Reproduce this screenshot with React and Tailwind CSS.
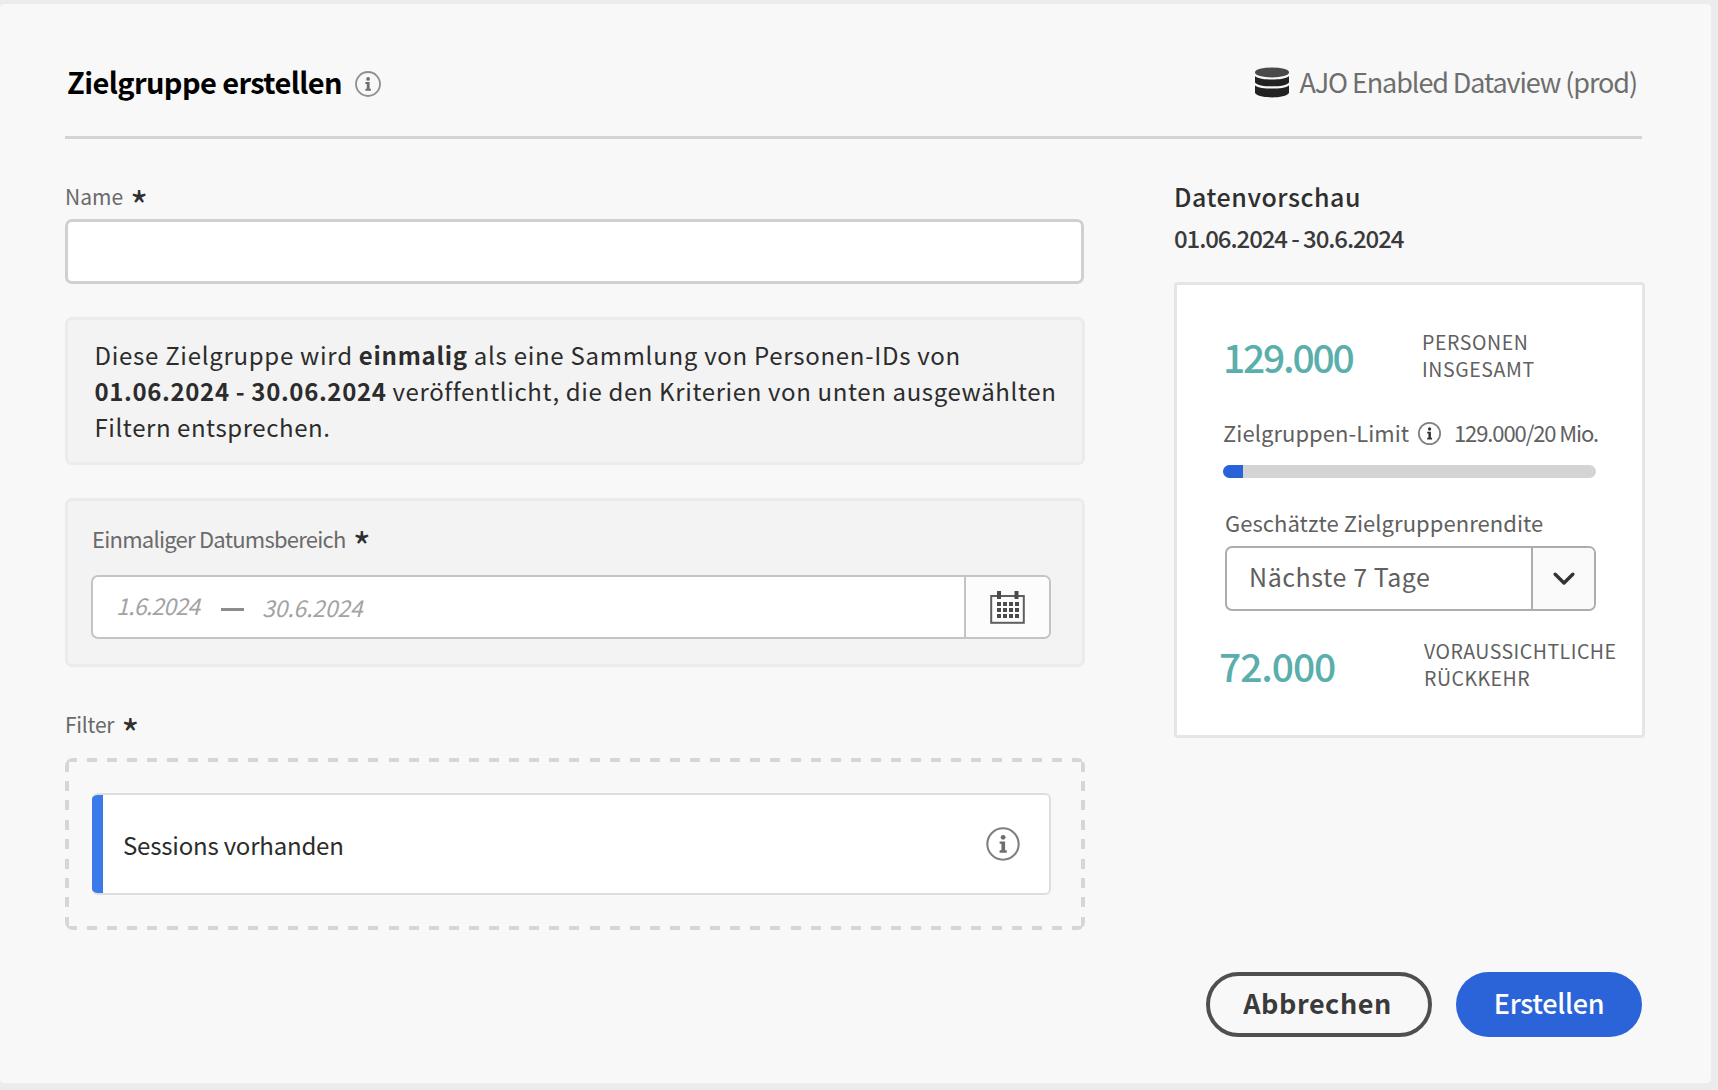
import React from "react";

function InfoIcon({ className, ring = 1.8, fill = "#6e6e6e" }) {
  return (
    <svg viewBox="0 0 26 26" className={className} fill="none">
      <circle cx="13" cy="13" r="12" stroke="currentColor" strokeWidth={ring} />
      <circle cx="13.1" cy="7.9" r="1.85" fill={fill} />
      <path d="M10.4 11.100h4.200v6.700h1.300v1.900h-5.500v-1.900h1.400v-4.900h-1.400z" fill={fill} />
    </svg>
  );
}

function DatabaseIcon({ className }) {
  return (
    <svg viewBox="0 0 34 31" className={className}>
      <ellipse cx="17" cy="5.4" rx="17" ry="5" fill="#4a4a4a" />
      <path d="M0 9.2c3 2.4 9.500 3.300 17 3.300s14-.9 17-3.300v6.200c-2 2.700-9 3.900-17 3.900S2 18.100 0 15.400z" fill="#222" />
      <path d="M0 18.400c3 2.300 9.500 3.200 17 3.200s14-.9 17-3.200v7.600c-2 3-9 4.400-17 4.400S2 29 0 26z" fill="#222" />
    </svg>
  );
}

function CalendarIcon({ className }) {
  const cols = [7, 13, 19, 25];
  const rows = [11, 17, 23];
  return (
    <svg viewBox="0 0 35 33" className={className} fill="none">
      <rect x="1.200" y="5" width="32.600" height="26.800" stroke="#5e5e5e" strokeWidth="2" />
      <rect x="7" y="0" width="4" height="8" fill="#4b4b4b" />
      <rect x="24.500" y="0" width="4" height="8" fill="#4b4b4b" />
      {rows.map((y) => cols.map((x) => <rect key={x + "-" + y} x={x} y={y} width="4" height="4" fill="#4b4b4b" />))}
    </svg>
  );
}

function FieldLabel({ children, className }) {
  return (
    <div className={"flex h-[30px] items-center whitespace-nowrap text-[#6a6a6a] " + className}>
      <span>{children}</span>
      <span className="mt-[13px] ml-[7px] text-[39px] leading-[30px] font-normal text-[#2f2f2f]">*</span>
    </div>
  );
}

export default function App() {
  return (
    <div className="h-[1090px] w-full overflow-hidden bg-[#ececec] pt-[4px] pr-[7px] font-['Noto_Sans_CJK_SC','Noto_Sans',sans-serif]">
      <div className="h-[1079px] rounded-[4px] bg-[#f8f8f8] pl-[65px]">
        <header className="flex h-[135px] w-[1577px] items-center border-b-[3px] border-[#d4d4d4] pt-[21px]">
          <h1 className="ml-[2px] text-[29px] leading-[44px] font-bold tracking-[-0.6px] whitespace-nowrap text-black">
            Zielgruppe erstellen
          </h1>
          <InfoIcon className="mt-[7px] ml-[13px] size-[26px] text-[#8e8e8e]" />
          <div className="mt-[2px] mr-[5px] ml-auto flex items-center">
            <DatabaseIcon className="mt-[1px] mr-[10px] h-[31px] w-[34px]" />
            <span className="text-[27px] leading-[40px] tracking-[-1.1px] whitespace-nowrap text-[#6e6e6e]">
              AJO Enabled Dataview (prod)
            </span>
          </div>
        </header>

        <div className="flex">
          <main className="w-[1020px]">
            <FieldLabel className="mt-[43px] text-[21px]">Name</FieldLabel>
            <div className="mt-[7px] h-[65px] w-[1019px] rounded-[7px] border-[3px] border-[#d0d0d0] bg-white" />

            <p className="mt-[33px] h-[148px] rounded-[7px] border-[3px] border-[#ebebeb] bg-[#f3f3f3] pt-[17px] pl-[26.500px] text-[24px] leading-[36px] whitespace-nowrap text-[#2c2c2c]">
              <span className="tracking-[0.72px]">
                Diese Zielgruppe wird <b>einmalig</b> als eine Sammlung von Personen-IDs von
              </span>
              <br />
              <span className="tracking-[0.63px]">
                <b>01.06.2024 - 30.06.2024</b> veröffentlicht, die den Kriterien von unten ausgewählten
              </span>
              <br />
              <span className="tracking-[0.57px]">Filtern entsprechen.</span>
            </p>

            <section className="mt-[33px] h-[169px] rounded-[7px] border-[3px] border-[#ebebeb] bg-[#f3f3f3] pt-[22px] pl-[23px]">
              <FieldLabel className="pl-[1px] text-[22px] tracking-[-0.75px]">Einmaliger Datumsbereich</FieldLabel>
              <div className="mt-[22px] flex h-[64px] w-[960px] items-stretch overflow-hidden rounded-[7px] border-2 border-[#c4c4c4] bg-white">
                <div className="flex flex-1 items-center pl-[23px] text-[23px] leading-[32px] text-[#a3a3a3] italic">
                  <span className="-mt-[5px] w-[85px] tracking-[-0.75px] whitespace-nowrap">1.6.2024</span>
                  <span className="mt-[4px] ml-[20px] h-[3px] w-[23px] bg-[#8c8c8c]" />
                  <span className="ml-[18px] tracking-[-0.2px] whitespace-nowrap">30.6.2024</span>
                </div>
                <div className="flex w-[85px] items-center border-l-2 border-[#c4c4c4] bg-[#fcfcfc] pl-[24px]">
                  <CalendarIcon className="h-[33px] w-[35px]" />
                </div>
              </div>
            </section>

            <FieldLabel className="mt-[43px] text-[21px] tracking-[-0.25px]">Filter</FieldLabel>
            <div className="mt-[18px] h-[172px] w-[1020px] rounded-[8px] bg-[repeating-linear-gradient(90deg,transparent_0_2px,#d6d6d6_2px_12px,transparent_12px_20.1px),repeating-linear-gradient(90deg,transparent_0_2px,#d6d6d6_2px_12px,transparent_12px_20.1px),repeating-linear-gradient(180deg,transparent_0_3.5px,#d6d6d6_3.5px_13.5px,transparent_13.5px_19.400px),repeating-linear-gradient(180deg,transparent_0_3.5px,#d6d6d6_3.5px_13.5px,transparent_13.5px_19.400px)] bg-[length:1020px_4px,1020px_4px,4px_172px,4px_172px] bg-[position:left_top,left_bottom,left_top,right_top] bg-no-repeat pt-[35px] pl-[27px]">
              <div className="flex h-[102px] w-[959px] items-center overflow-hidden rounded-[6px] border-2 border-l-0 border-[#dedede] bg-white">
                <span className="-my-[2px] h-[102px] w-[11px] bg-[#3b78e8]" />
                <span className="mt-[1px] ml-[20px] text-[24px] leading-[36px] tracking-[-0.2px] whitespace-nowrap text-[#2c2c2c]">
                  Sessions vorhanden
                </span>
                <InfoIcon className="-mt-[1px] mr-[29px] ml-auto size-[34px] text-[#808080]" ring={1.6} />
              </div>
            </div>
          </main>

          <aside className="ml-[90px] w-[470px]">
            <h2 className="mt-[42px] h-[30px] -indent-[1px] text-[25px] leading-[30px] font-medium tracking-[0.55px] text-[#2f2f2f]">
              Datenvorschau
            </h2>
            <div className="mt-[12px] h-[30px] -indent-[1px] text-[24px] leading-[30px] font-medium tracking-[-1.08px] whitespace-nowrap text-[#3a3a3a]">
              01.06.2024 - 30.6.2024
            </div>

            <div className="mt-[29px] -ml-[1px] h-[456px] rounded-[4px] border-[3px] border-[#e5e5e5] bg-white pt-[43px] pl-[45px] text-[#606060]">
              <div className="flex h-[54px] items-center">
                <span className="mt-[2px] ml-[1px] w-[199px] text-[39px] leading-[50px] font-medium tracking-[-2.2px] text-[#5aaeac]">129.000</span>
                <span className="text-[19.500px] leading-[27px] tracking-[0.6px] whitespace-nowrap">
                  PERSONEN
                  <br />
                  INSGESAMT
                </span>
              </div>

              <div className="mt-[35px] flex h-[30px] items-center text-[22px] leading-[30px] whitespace-nowrap">
                <span className="ml-[1px] w-[195px] tracking-[0.05px]">Zielgruppen-Limit</span>
                <InfoIcon className="mt-[3px] size-[23px] text-[#808080]" ring={2} fill="#333" />
                <span className="ml-[13px] tracking-[-1.1px]">129.000/20 Mio.</span>
              </div>
              <div className="mt-[18px] ml-[1px] h-[13px] w-[373px] overflow-hidden rounded-full bg-[#d4d4d4]">
                <div className="h-full w-[20px] bg-[#2864d8]" />
              </div>

              <div className="mt-[29px] ml-[3px] h-[30px] text-[22px] leading-[30px] tracking-[0.05px] whitespace-nowrap">
                Geschätzte Zielgruppenrendite
              </div>
              <div className="mt-[9px] ml-[3px] flex h-[65px] w-[371px] overflow-hidden rounded-[7px] border-2 border-[#adadad]">
                <span className="flex-1 pl-[22px] text-[25px] leading-[57px] tracking-[0.55px]">Nächste 7 Tage</span>
                <span className="flex w-[63px] items-center border-l-2 border-[#adadad] bg-[#fafafa] pl-[20px]">
                  <svg viewBox="0 0 22 14" className="h-[14px] w-[22px]" fill="none">
                    <path d="M2.200 2.200 11 11l8.800-8.800" stroke="#333" strokeWidth="3.400" strokeLinecap="round" strokeLinejoin="round" />
                  </svg>
                </span>
              </div>

              <div className="mt-[26px] flex h-[54px] items-center">
                <span className="mt-[1px] -ml-[3px] w-[205px] text-[39px] leading-[50px] font-medium tracking-[-1.1px] text-[#5aaeac]">72.000</span>
                <span className="text-[19.500px] leading-[27px] tracking-[0.5px] whitespace-nowrap">
                  VORAUSSICHTLICHE
                  <br />
                  RÜCKKEHR
                </span>
              </div>
            </div>
          </aside>
        </div>

        <footer className="mt-[42px] flex w-[1577px] justify-end gap-[24px]">
          <button className="h-[65px] w-[226px] rounded-full border-4 border-[#4f4f4f] pr-[3px] pb-[3px] text-[27px] leading-[50px] font-bold tracking-[0.55px] text-[#3a3a3a]">
            Abbrechen
          </button>
          <button className="h-[65px] w-[186px] rounded-full bg-[#2a64d8] pb-[3px] text-[27px] leading-[50px] font-medium tracking-[-0.3px] text-white">
            Erstellen
          </button>
        </footer>
      </div>
    </div>
  );
}
